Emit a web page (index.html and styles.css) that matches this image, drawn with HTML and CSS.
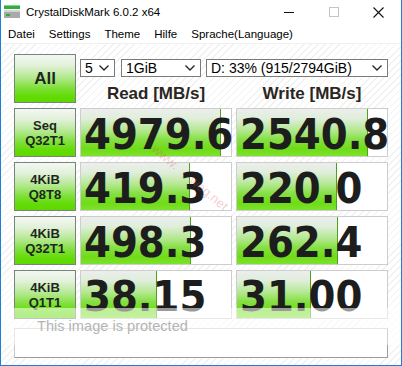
FILE: index.html
```html
<!DOCTYPE html>
<html>
<head>
<meta charset="utf-8">
<title>CrystalDiskMark</title>
<link rel="stylesheet" href="styles.css">
</head>
<body>
<div class="window">
  <div class="titlebar">
    <svg class="appicon" width="16" height="14" viewBox="0 0 16 14">
      <rect x="0" y="0" width="16" height="4" fill="#2fae3a"/>
      <rect x="0" y="0" width="16" height="1" fill="#7fd886"/>
      <rect x="0" y="5" width="16" height="8" fill="#a9a9a9"/>
      <rect x="0" y="5" width="16" height="2" fill="#d4d4d4"/>
      <rect x="2" y="9" width="4" height="2" fill="#2fae3a"/>
    </svg>
    <span class="title">CrystalDiskMark 6.0.2 x64</span>
    <div class="controls">
      <span class="ctl"><svg width="10" height="10" viewBox="0 0 10 10"><line x1="0" y1="5.5" x2="10" y2="5.5" stroke="#111" stroke-width="1"/></svg></span>
      <span class="ctl"><svg width="10" height="10" viewBox="0 0 10 10"><rect x="0.5" y="0.5" width="9" height="9" fill="none" stroke="#c4c4c4" stroke-width="1"/></svg></span>
      <span class="ctl"><svg width="11" height="11" viewBox="0 0 11 11"><path d="M0.5 0.5 L10.5 10.5 M10.5 0.5 L0.5 10.5" stroke="#111" stroke-width="1.1" fill="none"/></svg></span>
    </div>
  </div>
  <div class="menubar">
    <span class="mi">Datei</span>
    <span class="mi">Settings</span>
    <span class="mi">Theme</span>
    <span class="mi">Hilfe</span>
    <span class="mi">Sprache(Language)</span>
  </div>
  <div class="client">
    <div class="grid">
      <div class="btn all">All</div>
      <div class="top">
        <div class="selects">
          <div class="sel s1"><span>5</span><svg width="10" height="6" viewBox="0 0 10 6"><path d="M0.5 0.5 L5 5 L9.5 0.5" fill="none" stroke="#222" stroke-width="1.3"/></svg></div>
          <div class="sel s2"><span>1GiB</span><svg width="10" height="6" viewBox="0 0 10 6"><path d="M0.5 0.5 L5 5 L9.5 0.5" fill="none" stroke="#222" stroke-width="1.3"/></svg></div>
          <div class="sel s3"><span>D: 33% (915/2794GiB)</span><svg width="10" height="6" viewBox="0 0 10 6"><path d="M0.5 0.5 L5 5 L9.5 0.5" fill="none" stroke="#222" stroke-width="1.3"/></svg></div>
        </div>
        <div class="heads">
          <div class="head">Read [MB/s]</div>
          <div class="head">Write [MB/s]</div>
        </div>
      </div>

      <div class="btn lbl">Seq<br>Q32T1</div>
      <div class="cell"><div class="bar" style="width:140px"></div><div class="val">4979.6</div></div>
      <div class="cell"><div class="bar" style="width:131px"></div><div class="val">2540.8</div></div>

      <div class="btn lbl">4KiB<br>Q8T8</div>
      <div class="cell"><div class="bar" style="width:109px"></div><div class="val">419.3</div></div>
      <div class="cell"><div class="bar" style="width:100px"></div><div class="val">220.0</div></div>

      <div class="btn lbl">4KiB<br>Q32T1</div>
      <div class="cell"><div class="bar" style="width:110px"></div><div class="val">498.3</div></div>
      <div class="cell"><div class="bar" style="width:101px"></div><div class="val">262.4</div></div>

      <div class="btn lbl">4KiB<br>Q1T1</div>
      <div class="cell"><div class="bar" style="width:76px"></div><div class="val">38.15</div></div>
      <div class="cell"><div class="bar" style="width:74px"></div><div class="val">31.00</div></div>
    </div>
    <div class="comment"></div>
  </div>
  <div class="wm"><span>www.</span><span class="wm-gap"></span><span>weg.net</span></div>
  <div class="protect"><span>This image is protected</span></div>
</div>
</body>
</html>
```

FILE: styles.css
```css
html, body {
  margin: 0;
  padding: 0;
  background: #ffffff;
}

.window {
  width: 402px;
  height: 366px;
  box-sizing: border-box;
  border: 1px solid #1b7fd6;
  border-top: none;
  display: flex;
  flex-direction: column;
  position: relative;
  overflow: hidden;
  font-family: "Liberation Sans", Arial, sans-serif;
  background: #ffffff;
}

.titlebar {
  height: 24px;
  display: flex;
  align-items: center;
  background: #ffffff;
}

.appicon {
  margin-left: 3px;
  margin-top: -1px;
}

.title {
  margin-left: 6px;
  font-size: 11.5px;
  color: #000;
}

.controls {
  margin-left: auto;
  display: flex;
  height: 24px;
}

.ctl {
  width: 45px;
  height: 24px;
  display: flex;
  align-items: center;
  justify-content: center;
}

.menubar {
  height: 19px;
  display: flex;
  align-items: center;
  background: #ffffff;
}

.mi {
  padding: 0 7px;
  font-size: 11.5px;
  color: #000;
}

.client {
  flex: 1;
  padding: 10px 0 0 13px;
  background: repeating-linear-gradient(135deg, #ffffff 0px, #ffffff 4px, #f1f1f1 4px, #f1f1f1 5px);
  border-top: 1px solid #f0f0f0;
}

.grid {
  display: grid;
  grid-template-columns: 62px 152px 152px;
  grid-template-rows: 49px 49px 49px 49px 49px;
  column-gap: 4px;
  row-gap: 5px;
}

.btn {
  box-sizing: border-box;
  border: 1px solid #76857a;
  background: linear-gradient(to bottom, #f4f7f3 0%, #e2f1da 22%, #b2e88e 48%, #7fe03a 70%, #62dc04 88%, #5ed800 100%);
  display: flex;
  align-items: center;
  justify-content: center;
  text-align: center;
  font-weight: bold;
  color: #1f261f;
}

.all {
  font-size: 17px;
}

.lbl {
  font-size: 13px;
  line-height: 15px;
}

.top {
  grid-column: 2 / 4;
  display: flex;
  flex-direction: column;
}

.selects {
  margin-top: 5px;
  display: flex;
  height: 18px;
}

.sel {
  box-sizing: border-box;
  height: 18px;
  border: 1px solid #7a7a7a;
  background: #fff;
  display: flex;
  align-items: center;
  justify-content: space-between;
  padding: 0 5px 0 4px;
  font-size: 14px;
  color: #000;
}

.s1 { width: 35px; }
.s2 { width: 80px; margin-left: 6px; }
.s3 { width: 182px; margin-left: 5px; }

.heads {
  margin-top: 7px;
  display: grid;
  grid-template-columns: 152px 152px;
  column-gap: 4px;
}

.head {
  text-align: center;
  font-size: 17px;
  line-height: 20px;
  font-weight: bold;
  color: #2a2622;
}

.cell {
  box-sizing: border-box;
  border: 1px solid #cdcdcd;
  background: #ffffff;
  display: grid;
}

.bar {
  grid-area: 1 / 1;
  height: 100%;
  box-sizing: border-box;
  border-right: 1px solid #4f9f22;
  background: linear-gradient(to bottom, #eceeec 0%, #e0eedb 20%, #b4e892 45%, #86e044 65%, #6fdc16 85%, #7ee22c 100%);
}

.val {
  grid-area: 1 / 1;
  align-self: start;
  padding: 6px 0 0 3px;
  font-family: "DejaVu Sans Condensed", "DejaVu Sans", sans-serif;
  font-weight: bold;
  font-size: 43px;
  line-height: 38px;
  color: #1d1d1d;
  white-space: nowrap;
}

.comment {
  margin-top: 9px;
  width: 374px;
  height: 30px;
  box-sizing: border-box;
  border: 1px solid #c9c9c9;
  border-right-color: #9c9c9c;
  border-bottom-color: #9c9c9c;
  background: #ffffff;
}

.wm {
  position: absolute;
  left: 157px;
  top: 142px;
  transform: rotate(40deg);
  transform-origin: left top;
  display: flex;
  font-size: 13px;
  line-height: 14px;
  color: rgba(214, 70, 70, 0.28);
  white-space: nowrap;
  pointer-events: none;
}

.wm-gap {
  width: 18px;
}

.protect {
  position: absolute;
  left: 0;
  right: 0;
  top: 308px;
  height: 37px;
  background: rgba(255, 255, 255, 0.55);
}

.protect span {
  position: absolute;
  left: 36px;
  top: 10px;
  font-size: 14.6px;
  color: #b4b4b4;
}
```
